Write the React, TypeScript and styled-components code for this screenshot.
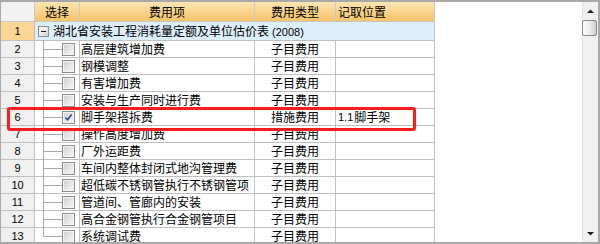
import React from 'react';
import styled, { createGlobalStyle } from 'styled-components';

const GlobalStyle = createGlobalStyle`
  html, body { margin: 0; padding: 0; background: #fff; }
  body { font-family: "Noto Sans CJK SC", "Liberation Sans", sans-serif; color: #000; }
`;

const Panel = styled.div`
  position: relative;
  width: 600px;
  height: 244px;
  box-sizing: border-box;
  border-style: solid;
  border-color: #a9a9a9;
  border-width: 2px 2px 2px 1px;
  display: flex;
  overflow: hidden;
  background: #fff;
`;

const GridArea = styled.div`
  flex: 1;
  overflow: hidden;
  background: #fff;
`;

const Table = styled.div`
  display: grid;
  grid-template-columns: 34px 45px 175px 81px 99px;
  grid-template-rows: 20px 19px;
  grid-auto-rows: 17px;
  width: 434px;
`;

const Cell = styled.div<{ $align?: 'left' | 'center' }>`
  box-sizing: border-box;
  display: flex;
  align-items: center;
  justify-content: ${(p) => (p.$align === 'center' ? 'center' : 'flex-start')};
  border-right: 1px solid #c0c0c0;
  border-bottom: 1px solid #c0c0c0;
  overflow: hidden;
  white-space: nowrap;
  font-size: 12px;
  line-height: 16px;
`;

const HeaderCell = styled(Cell)<{ $corner?: boolean; $pad?: number }>`
  background: ${(p) =>
    p.$corner ? '#f2f2f2' : 'linear-gradient(180deg, #fde5b4 0%, #f9d48e 50%, #f5c36b 100%)'};
  border-right-color: #cbcbcb;
  border-bottom-color: #c8c8c8;
  padding-left: ${(p) => p.$pad ?? 0}px;
`;

const RowNum = styled(Cell)<{ $active?: boolean }>`
  justify-content: center;
  background: ${(p) => (p.$active ? '#fbd796' : '#f0f0f0')};
  font-family: "Liberation Sans", "DejaVu Sans", sans-serif;
  font-size: 11px;
`;

const TitleCell = styled(Cell)`
  grid-column: 2 / span 4;
  background: #ddeefc;
  padding-left: 3px;
  gap: 4px;
`;

const Year = styled.span`
  font-family: "Liberation Sans", "DejaVu Sans", sans-serif;
  font-size: 11px;
  margin-left: 3px;
`;

const ExpandBox = styled.span`
  position: relative;
  width: 11px;
  height: 11px;
  box-sizing: border-box;
  border: 1px solid #8f8f8f;
  background: linear-gradient(135deg, #ffffff 0%, #e6e6e6 60%, #cfcfcf 100%);
  flex: none;
  &::after {
    content: '';
    position: absolute;
    left: 2px;
    right: 2px;
    top: 4px;
    height: 1px;
    background: #1f1f1f;
  }
`;

const TreeCell = styled(Cell)<{ $last?: boolean }>`
  position: relative;
  overflow: visible;
  padding-left: 27px;
  &::before {
    content: '';
    position: absolute;
    left: 8px;
    top: -1px;
    height: ${(p) => (p.$last ? '9px' : 'calc(100% + 1px)')};
    width: 1px;
    background: #a8a8a8;
  }
  &::after {
    content: '';
    position: absolute;
    left: 8px;
    top: 8px;
    width: 19px;
    height: 1px;
    background: #a8a8a8;
  }
`;

const Check = styled.span`
  width: 13px;
  height: 13px;
  box-sizing: border-box;
  border: 1px solid #8c8d8e;
  background: linear-gradient(135deg, #cbcbcb 0%, #e2e2e2 45%, #f7f7f7 100%);
  box-shadow: inset 0 0 0 1px #f4f4f4;
  display: flex;
  align-items: center;
  justify-content: center;
  flex: none;
`;

const NameCell = styled(Cell)`
  padding-left: 1px;
`;

const PosCell = styled(Cell)`
  padding-left: 2px;
`;

const Num = styled.span`
  font-family: "Liberation Sans", "DejaVu Sans", sans-serif;
  font-size: 11px;
  margin-right: 1px;
`;

const Scrollbar = styled.div`
  width: 16px;
  box-sizing: border-box;
  display: flex;
  flex-direction: column;
  background: #f0f0f0;
  border-left: 1px solid #e6e6e6;
`;

const ScrollButton = styled.div`
  height: 18px;
  display: flex;
  align-items: center;
  justify-content: center;
  flex: none;
`;

const Thumb = styled.div`
  height: 16px;
  width: 15px;
  margin-left: -1px;
  box-sizing: border-box;
  border: 1px solid #8a8a8a;
  border-radius: 2px;
  background: linear-gradient(90deg, #fbfbfb 0%, #ececec 50%, #cdcdcd 100%);
  flex: none;
`;

const Track = styled.div`
  flex: 1;
`;

const Highlight = styled.div`
  position: absolute;
  left: 6px;
  top: 105px;
  width: 409px;
  height: 24px;
  box-sizing: border-box;
  border: 3px solid #fb1c1c;
  border-radius: 3px;
  pointer-events: none;
`;

type Row = { name: string; type: string; pos?: string; checked?: boolean };

const rows: Row[] = [
  { name: '高层建筑增加费', type: '子目费用' },
  { name: '钢模调整', type: '子目费用' },
  { name: '有害增加费', type: '子目费用' },
  { name: '安装与生产同时进行费', type: '子目费用' },
  { name: '脚手架搭拆费', type: '措施费用', pos: '脚手架', checked: true },
  { name: '操作高度增加费', type: '子目费用' },
  { name: '厂外运距费', type: '子目费用' },
  { name: '车间内整体封闭式地沟管理费', type: '子目费用' },
  { name: '超低碳不锈钢管执行不锈钢管项', type: '子目费用' },
  { name: '管道间、管廊内的安装', type: '子目费用' },
  { name: '高合金钢管执行合金钢管项目', type: '子目费用' },
  { name: '系统调试费', type: '子目费用' },
];

const Arrow = ({ down }: { down?: boolean }) => (
  <svg width="7" height="5" viewBox="0 0 7 5">
    <polygon points={down ? '0,1 7,1 3.5,4.5' : '3.5,0.5 7,4 0,4'} fill="#1c1c1c" />
  </svg>
);

const CheckMark = () => (
  <svg width="9" height="9" viewBox="0 0 9 9">
    <path d="M1.5 4.5 L3.6 6.8 L7.6 1.6" fill="none" stroke="#2a44a6" strokeWidth="1.6" />
  </svg>
);

export default function App() {
  return (
    <>
      <GlobalStyle />
      <Panel>
        <GridArea>
          <Table>
            <HeaderCell $corner />
            <HeaderCell $align="center">选择</HeaderCell>
            <HeaderCell $align="center">费用项</HeaderCell>
            <HeaderCell $align="center">费用类型</HeaderCell>
            <HeaderCell $pad={2}>记取位置</HeaderCell>

            <RowNum $active>1</RowNum>
            <TitleCell>
              <ExpandBox />
              <span>
                湖北省安装工程消耗量定额及单位估价表<Year>(2008)</Year>
              </span>
            </TitleCell>

            {rows.map((r, i) => (
              <React.Fragment key={i}>
                <RowNum>{i + 2}</RowNum>
                <TreeCell $last={i === rows.length - 1}>
                  <Check>{r.checked && <CheckMark />}</Check>
                </TreeCell>
                <NameCell>{r.name}</NameCell>
                <Cell $align="center">{r.type}</Cell>
                <PosCell>
                  {r.pos && (
                    <>
                      <Num>1.1</Num>
                      {r.pos}
                    </>
                  )}
                </PosCell>
              </React.Fragment>
            ))}
          </Table>
        </GridArea>
        <Scrollbar>
          <ScrollButton>
            <Arrow />
          </ScrollButton>
          <Thumb />
          <Track />
          <ScrollButton>
            <Arrow down />
          </ScrollButton>
        </Scrollbar>
        <Highlight />
      </Panel>
    </>
  );
}
